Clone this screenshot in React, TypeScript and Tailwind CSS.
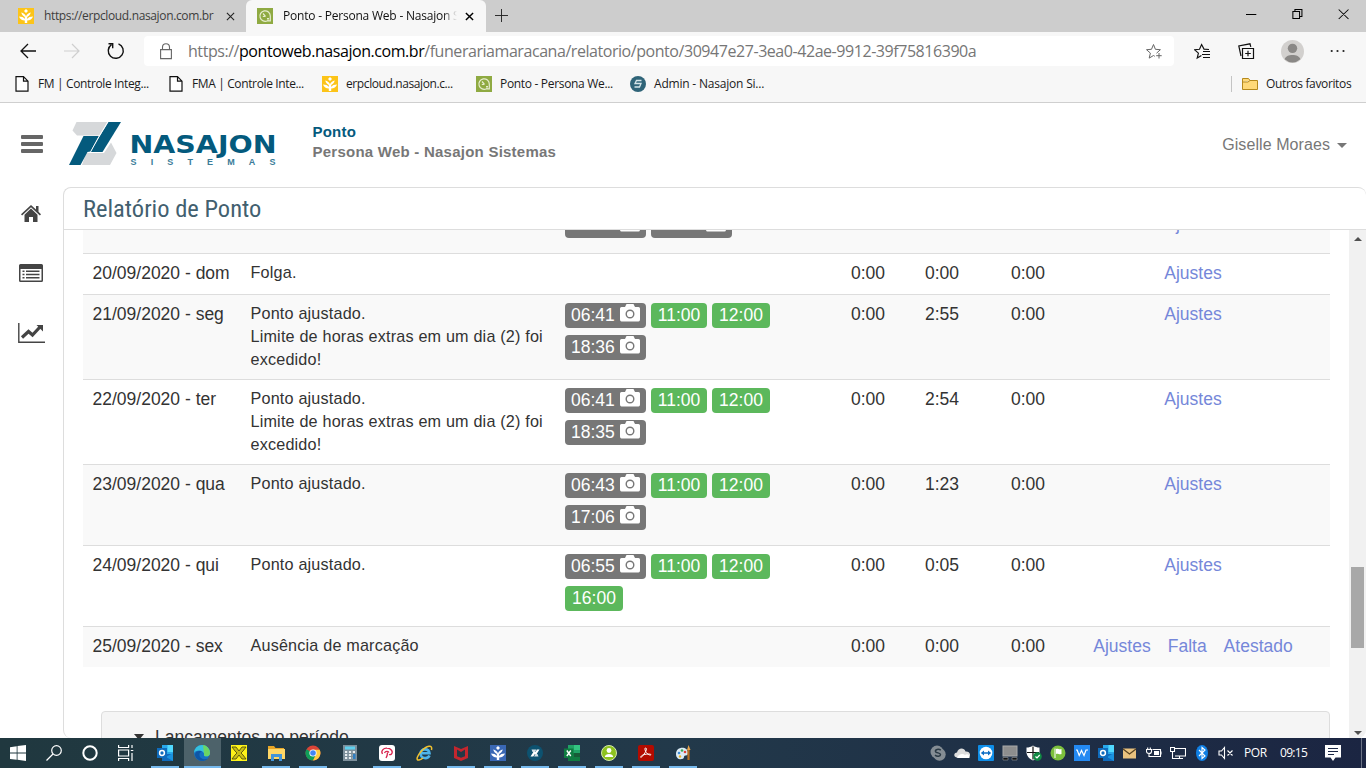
import React from "react";

const UI = "font-['Open_Sans','Noto_Sans',sans-serif]";
const ARIAL = "font-['Liberation_Sans',Arial,sans-serif]";

type Box = { className?: string };

function SproutIcon({ className = "" }: Box) {
  return (
    <svg viewBox="0 0 16 16" className={`size-4 shrink-0 ${className}`}>
      <rect width="16" height="16" fill="currentColor" />
      <path d="M8 1l2 2-2 2-2-2zM1 8.500c2.500 0 5 .8 5.800 2.500V9C5.500 8.200 4 7 3.200 4.500 5.500 5 7.500 6.500 8 8.500c.5-2 2.500-3.500 4.800-4C12 7 10.500 8.200 9.200 9v2c.8-1.700 3.300-2.500 5.800-2.500-1 2.500-3 4-5.800 4V15H6.800v-2.500C4 12.500 2 11 1 8.500z" fill="#fff" />
    </svg>
  );
}

function PontoIcon() {
  return (
    <svg viewBox="0 0 16 16" className="size-4 shrink-0">
      <rect width="16" height="16" fill="#8faa42" />
      <path d="M10.500 12.700A5.200 5.200 0 1 1 13.300 8v4.800h-3" stroke="#e6edcf" strokeWidth="1.200" fill="none" />
      <path d="M6 5.500l2.500 3M8.500 8.500H5.800M10 10.500h2M10 12h2" stroke="#e6edcf" strokeWidth="1.200" fill="none" />
    </svg>
  );
}

function PageIcon() {
  return (
    <svg viewBox="0 0 14 16" className="h-4 w-3.5 shrink-0" fill="#fff" stroke="#111" strokeWidth="1.200">
      <path d="M1 .7h7.500L13 5.200v10H1zM8.500.7v4.500H13" />
    </svg>
  );
}

function CloseIcon({ className = "" }: Box) {
  return (
    <svg viewBox="0 0 10 10" className={`size-[9px] shrink-0 ${className}`} stroke="currentColor" fill="none">
      <path d="M1 1l8 8M9 1L1 9" />
    </svg>
  );
}

function TabStrip() {
  return (
    <div className="flex h-8 shrink-0 bg-[#cdcdcd]">
      <div className="flex w-[246px] items-center pl-[18px] text-[#3d3d3d]">
        <SproutIcon className="text-[#fcc419]" />
        <span className="ml-[10px] w-[172px] whitespace-nowrap text-[12px] tracking-[-0.36px]">https://erpcloud.nasajon.com.br</span>
        <CloseIcon className="ml-[10px] stroke-[1.200] text-[#222]" />
      </div>
      <div className="flex w-[240px] items-center rounded-t-md bg-[#f7f7f7] pl-[11px] text-[#111]">
        <PontoIcon />
        <span className="ml-[10px] w-[174px] overflow-hidden whitespace-nowrap text-[12px] tracking-[-0.21px] [mask-image:linear-gradient(to_right,#000_92%,transparent)]">
          Ponto - Persona Web - Nasajon Sistemas
        </span>
        <CloseIcon className="ml-[8px] stroke-[1.600] text-black" />
      </div>
      <svg viewBox="0 0 14 14" className="mt-[9px] ml-[9px] size-[13px]" stroke="#222" fill="none"><path d="M7 0v14M0 7h14" /></svg>
      <div className="flex-1" />
      <svg viewBox="0 0 100 12" className="mt-2 mr-[17px] h-3 w-[103px] shrink-0" preserveAspectRatio="none" stroke="#000" fill="none">
        <path d="M0 6.500h10M45.500 3.500h6.500v7h-6.500zM47.500 3.500v-2h6.800v7h-2.300M90 1.500l9.500 9.500M99.500 1.500L90 11" />
      </svg>
    </div>
  );
}

function Toolbar() {
  return (
    <div className="flex h-[38px] shrink-0 items-center bg-[#f7f7f7]">
      <svg viewBox="0 0 16 16" className="ml-5 size-4" stroke="#111" strokeWidth="1.300" fill="none"><path d="M16 8H1M8 1L1 8l7 7" /></svg>
      <svg viewBox="0 0 16 16" className="ml-7 size-4" stroke="#cfcfcf" strokeWidth="1.200" fill="none"><path d="M0 8h15M8 1l7 7-7 7" /></svg>
      <svg viewBox="0 0 18 18" className="ml-[27px] size-[18px]" stroke="#111" strokeWidth="1.400" fill="none"><path d="M11.500 1.800A7.500 7.500 0 1 1 4.500 2.600M1.500 1.700h4.200v4.500" /></svg>
      <div className="ml-[19px] flex h-[30px] w-[1030px] items-center rounded bg-white pl-[16px]">
        <svg viewBox="0 0 12 17" className="h-[17px] w-3" stroke="#666" strokeWidth="1.100" fill="none"><path d="M.6 6.600h10.800v9H.6zM2.500 6.500V4.300a3.500 3.500 0 0 1 7 0v2.200" /></svg>
        <span className="ml-4 w-[790px] whitespace-nowrap text-[16px] leading-[22px] tracking-[-0.445px] text-[#767676]">
          https://<span className="text-black">pontoweb.nasajon.com.br</span>/funerariamaracana/relatorio/ponto/30947e27-3ea0-42ae-9912-39f75816390a
        </span>
        <svg viewBox="0 0 17 17" className="ml-[168px] size-[17px] shrink-0" stroke="#666" fill="none"><path d="M10.500 10.200l3.900-3.500-5-.4L7.500 1.500 5.500 6.300l-5 .4 3.900 3.400-1.200 5 4.300-2.600 1.300.8M13 10v5.500M10.200 12.700h5.500" /></svg>
      </div>
      <svg viewBox="0 0 17 17" className="ml-5 size-[17px]" stroke="#111" strokeWidth="1.150" fill="none"><path d="M15 6.500l-5-.4L7.600 1.500 5.500 6.300l-5 .4 3.900 3.400-1.200 5 4.200-2.500M9 8.500h7M8 11.500h8M9 14.500h7" /></svg>
      <svg viewBox="0 0 17 17" className="ml-[27px] size-[17px]" stroke="#111" strokeWidth="1.200" fill="none"><path d="M4.500 5.500h11v10h-11zM10 7.700v5.600M7.200 10.500h5.600M3 13L.8 3 12 .8l.8 3" /></svg>
      <svg viewBox="0 0 22 22" className="ml-[26px] size-[23px]">
        <circle cx="11" cy="11" r="11" fill="#d2d0ce" />
        <circle cx="11" cy="8" r="4.500" fill="#8a8886" />
        <path d="M3.500 18.500c1-5.500 14-5.500 15 0A11 11 0 0 1 3.500 18.500z" fill="#8a8886" />
      </svg>
      <svg viewBox="0 0 16 4" className="ml-[26px] h-1 w-4" fill="#222"><circle cx="1.700" cy="2" r="1.100" /><circle cx="7.500" cy="2" r="1.100" /><circle cx="13.500" cy="2" r="1.100" /></svg>
    </div>
  );
}

function Bookmarks() {
  const text = "whitespace-nowrap text-[12px]";
  return (
    <div className="flex h-[33px] shrink-0 items-center border-b border-[#cfcfcf] bg-[#f7f7f7] pb-1 pl-[15px] text-[#1b1b1b]">
      <div className="flex w-[154px] items-center gap-[9px]"><PageIcon /><span className={`${text} tracking-[-0.37px]`}>FM | Controle Integ...</span></div>
      <div className="flex w-[153px] items-center gap-[9px]"><PageIcon /><span className={`${text} tracking-[-0.37px]`}>FMA | Controle Inte...</span></div>
      <div className="flex w-[154px] items-center gap-2"><SproutIcon className="text-[#fcc419]" /><span className={`${text} tracking-[-0.4px]`}>erpcloud.nasajon.c...</span></div>
      <div className="flex w-[154px] items-center gap-2"><PontoIcon /><span className={`${text} tracking-[-0.32px]`}>Ponto - Persona We...</span></div>
      <div className="flex items-center gap-2">
        <svg viewBox="0 0 16 16" className="size-4"><circle cx="8" cy="8" r="8" fill="#2f6478" /><path d="M11.500 4.500h-5L5 7.500h6l-1.500 3.500h-5" stroke="#d5e5e9" strokeWidth="1.300" fill="none" /></svg>
        <span className={`${text} tracking-[-0.2px]`}>Admin - Nasajon Si...</span>
      </div>
      <div className="ml-auto h-4 w-px bg-[#c4c4c4]" />
      <svg viewBox="0 0 16 12" className="ml-[10px] h-3 w-4" fill="#ffd978" stroke="#b5891c"><path d="M.5.5h6l1.500 2h7.500v9H.5zM.5 4h5.500l2-1.500" /></svg>
      <span className={`${text} ml-2 w-[86px] tracking-[-0.36px]`}>Outros favoritos</span>
      <span className="w-[14px]" />
    </div>
  );
}

function Header() {
  return (
    <header className="flex h-[84px] shrink-0 bg-white">
      <div className="mt-8 ml-[21px] flex h-[18px] w-[22px] flex-col justify-between">
        <div className="h-1 rounded-[1px] bg-[#666]" />
        <div className="h-1 rounded-[1px] bg-[#666]" />
        <div className="h-1 rounded-[1px] bg-[#666]" />
      </div>
      <svg viewBox="0 0 210 46" className="mt-[18px] ml-[25px] h-[46px] w-[210px]">
        <path d="M8.500 1H40L31.500 14.500H9L4.500 9.500zM18 32H36L43 21.500 48.500 32 42 44H14z" fill="#d6d8da" />
        <path d="M1 44L15.500 15H31L22.500 30.500 19.500 31 12.500 44z" fill="#045a7d" />
        <path d="M40.500 1H53L34.500 31H22z" fill="#045a7d" />
        <path d="M40 .5L31 15.500 22.500 31" fill="none" stroke="#fff" strokeWidth="1" />
        <text x="61.500" y="31.500" textLength="147" lengthAdjust="spacingAndGlyphs" className="font-['DejaVu_Sans',sans-serif] text-[25px] font-bold" fill="#045a7d">NASAJON</text>
        <text x="62.500" y="43.700" textLength="145" className="font-['Liberation_Sans',sans-serif] text-[9px] font-bold" fill="#3a7c98">SISTEMAS</text>
      </svg>
      <div className="mt-[19px] ml-[34.500px] text-[15px] leading-5 font-bold whitespace-nowrap text-[#777]">
        <div className="tracking-[0.2px] text-[#045a7d]">Ponto</div>
        <div className="tracking-[0.24px]">Persona Web - Nasajon Sistemas</div>
      </div>
      <div className="mt-[30px] mr-[19px] ml-auto flex h-6 items-center text-[16px] tracking-[0.08px] text-[#777]">
        Giselle Moraes
        <svg viewBox="0 0 10 5" className="ml-[7px] h-[5px] w-[10px]" fill="#777"><path d="M0 0h10L5 5z" /></svg>
      </div>
    </header>
  );
}

function Sidebar() {
  return (
    <nav className="flex w-[63px] shrink-0 flex-col items-center pt-[18px] pr-px text-[#444]">
      <svg viewBox="0 0 20 17" className="h-[17px] w-5" fill="#444">
        <path d="M10 3.600l6.500 6.200V17H12v-5H8v5H3.500V9.800zM10 0L0 9.200l1.100 1.200L10 2.200l8.900 8.200L20 9.200 17.500 6.800V1H15v3.500z" />
      </svg>
      <svg viewBox="0 0 24 18" className="mt-[42px] h-[18px] w-6" fill="#444">
        <path d="M1.500 0h21Q24 0 24 1.500v15Q24 18 22.500 18h-21Q0 18 0 16.500v-15Q0 0 1.500 0zM1.500 5v11.500h21V5zM3.500 6.500h2V8h-2zM7 6.500h13.500V8H7zM3.500 9.800h2v1.500h-2zM7 9.800h13.500v1.500H7zM3.500 13h2v1.500h-2zM7 13h13.500v1.500H7z" fillRule="evenodd" />
      </svg>
      <svg viewBox="0 0 27 20" className="mt-[41px] h-5 w-[27px]" fill="none" stroke="#444">
        <path d="M.8 0v19.300H27" strokeWidth="1.400" />
        <path d="M4 14.500l6.500-6 4 3.500 7.500-8" strokeWidth="3.200" />
        <path d="M18.500 2H25v6.500z" fill="#444" stroke="none" />
      </svg>
    </nav>
  );
}

function Camera() {
  return (
    <svg viewBox="0 0 20 18" className="-mt-[3px] ml-[5px] h-[18px] w-5" fill="#fff">
      <path d="M6.500 0h7L15 3h3.500Q20 3 20 4.500v11Q20 17.500 18.500 17.500h-17Q0 17.500 0 15.500v-11Q0 3 1.500 3H5zM10 5.500a4.500 4.500 0 1 0 0 9 4.500 4.500 0 0 0 0-9zm0 1.400a3.100 3.100 0 1 1 0 6.200 3.100 3.100 0 0 1 0-6.200z" fillRule="evenodd" />
    </svg>
  );
}

function Stamp({ time, photo }: { time: string; photo: boolean }) {
  return photo ? (
    <span className="flex h-[25px] w-[81px] items-center rounded bg-[#777] pb-[2px] pl-[6px] text-white">{time}<Camera /></span>
  ) : (
    <span className={`flex h-[25px] items-center justify-center rounded bg-[#5cb85c] pb-[2px] text-white ${time === "11:00" ? "w-14" : "w-[58px]"}`}>{time}</span>
  );
}

const cols = "grid grid-cols-[158px_314px_273px_72px_86px_97px_1fr] border-b border-[#ddd] pl-[10px]";

type Row = { date: string; notes: string[]; stamps: [string, boolean][]; extra: string; links: string[]; cls: string };
const rows: Row[] = [
  { date: "20/09/2020 - dom", notes: ["Folga."], stamps: [], extra: "0:00", links: ["Ajustes"], cls: "h-[41px]" },
  { date: "21/09/2020 - seg", notes: ["Ponto ajustado.", "Limite de horas extras em um dia (2) foi", "excedido!"], stamps: [["06:41", true], ["11:00", false], ["12:00", false], ["18:36", true]], extra: "2:55", links: ["Ajustes"], cls: "h-[85px] bg-[#f9f9f9]" },
  { date: "22/09/2020 - ter", notes: ["Ponto ajustado.", "Limite de horas extras em um dia (2) foi", "excedido!"], stamps: [["06:41", true], ["11:00", false], ["12:00", false], ["18:35", true]], extra: "2:54", links: ["Ajustes"], cls: "h-[85px]" },
  { date: "23/09/2020 - qua", notes: ["Ponto ajustado."], stamps: [["06:43", true], ["11:00", false], ["12:00", false], ["17:06", true]], extra: "1:23", links: ["Ajustes"], cls: "h-[81px] bg-[#f9f9f9]" },
  { date: "24/09/2020 - qui", notes: ["Ponto ajustado."], stamps: [["06:55", true], ["11:00", false], ["12:00", false], ["16:00", false]], extra: "0:05", links: ["Ajustes"], cls: "h-[81px]" },
  { date: "25/09/2020 - sex", notes: ["Ausência de marcação"], stamps: [], extra: "0:00", links: ["Ajustes", "Falta", "Atestado"], cls: "h-10 border-b-0! bg-[#f9f9f9]" },
];

function Report() {
  return (
    <main className="flex min-w-0 flex-1 flex-col overflow-hidden rounded-lg border border-r-0 border-b-0 border-[#ddd] bg-white">
      <div className="h-[42px] shrink-0 border-b border-[#ddd] pl-[19px]">
        <h1 className="font-['Roboto_Condensed','Roboto',sans-serif] text-[24.5px] leading-[41px] whitespace-nowrap text-[#42606f]">Relatório de Ponto</h1>
      </div>
      <div className="flex min-h-0 flex-1">
        <div className={`${ARIAL} min-w-0 flex-1 overflow-hidden pr-[19px] pl-[19px] text-[#333]`}>
          <div className={`${cols} h-6 bg-[#f9f9f9] text-[17.5px]`}>
            <div className="col-start-3 -mt-[17px] flex gap-[5px]">
              <Stamp time="06:41" photo />
              <Stamp time="18:36" photo />
            </div>
            <div className="col-start-7 -mt-[16px] flex h-5 items-center justify-center pr-[37px] text-[#7587d9]">Ajustes</div>
          </div>
          {rows.map((r) => (
            <div key={r.date} className={`${cols} text-[17.5px] leading-[22px] ${r.cls}`}>
              <div className="-ml-[0.500px] pt-2 whitespace-nowrap">{r.date}</div>
              <div className="-ml-[0.500px] pt-[7px] text-[16.2px] leading-[23px] tracking-[0.18px] whitespace-nowrap">{r.notes.map((n) => <div key={n}>{n}</div>)}</div>
              <div className="flex flex-wrap content-start gap-x-[5px] gap-y-[7px] pt-2 pr-[40px]">
                {r.stamps.map(([time, photo], i) => <Stamp key={i} time={time} photo={photo} />)}
              </div>
              <div className="pt-2 pl-[13px]">0:00</div>
              <div className="pt-2 pl-[15px]">{r.extra}</div>
              <div className="pt-2 pl-[15px]">0:00</div>
              <div className="flex justify-center gap-[17px] pt-2 pr-[37px] text-[#7587d9]">
                {r.links.map((l) => <a key={l}>{l}</a>)}
              </div>
            </div>
          ))}
          <div className="mt-11 ml-[18px] flex h-[60px] items-start rounded border border-[#ddd] bg-[#f5f5f5] pt-[14px] pl-8 text-[17.5px] leading-[22px]">
            <svg viewBox="0 0 10 6" className="mt-2 mr-[11px] h-[6px] w-[10px]" fill="#333"><path d="M0 0h10L5 6z" /></svg>
            Lançamentos no período
          </div>
        </div>
        <div className="flex w-[17px] shrink-0 flex-col items-center bg-[#f1f1f1] pt-[7px]">
          <svg viewBox="0 0 8 4" className="h-1 w-2" fill="#505050"><path d="M4 0l4 4H0z" /></svg>
          <div className="mt-[326px] h-[81px] w-[13px] bg-[#a8a8a8]" />
          <svg viewBox="0 0 8 4" className="mt-[83px] h-1 w-2" fill="#505050"><path d="M0 0h8L4 4z" /></svg>
        </div>
      </div>
    </main>
  );
}

const ic = "size-4";
function Outlook() {
  return (
    <svg viewBox="0 0 16 16" className={ic}>
      <path d="M5 0h11v14H5z" fill="#28a8ea" /><path d="M10.500 0H16v7h-5.500z" fill="#50d9ff" /><path d="M5 9l11 0v7H5z" fill="#0f6bbd" /><path d="M16 8l-7 4 7 4z" fill="#1a93e0" />
      <rect y="3" width="10" height="10" fill="#0f6cbd" /><circle cx="5" cy="8" r="2.400" fill="none" stroke="#fff" strokeWidth="1.500" />
    </svg>
  );
}

type AppEntry = { icon: React.ReactNode; open?: boolean; active?: boolean };
const apps: AppEntry[] = [
  { open: true, icon: <Outlook /> },
  {
    open: true, active: true,
    icon: (
      <svg viewBox="0 0 16 16" className={ic}>
        <circle cx="8" cy="8" r="8" fill="#1673c4" /><path d="M0 8a8 8 0 0 1 16 0c0 2.500-2 3.600-4.500 3.300C9 11 10.500 9.500 9.800 8 8.500 5 2.500 4.500 0 8z" fill="#35c1e0" /><path d="M9 0a8 8 0 0 1 7 8c0 2.500-2 3.600-4.500 3.300C9.500 11 10.300 9.800 10 8.500z" fill="#6bd664" />
        <path d="M5.500 9c-.5 4 3.500 6 8 4.800C10 17.500 2 16 1 10c0-3 4-5 7-3.200C6.500 7 5.700 7.700 5.500 9z" fill="#0f56a5" />
      </svg>
    ),
  },
  { icon: <svg viewBox="0 0 16 16" className={ic}><rect width="16" height="16" fill="#fdf219" /><path d="M1 2l4 0 3 4 3-4h4l-3 4-2 2 2 2 3 4h-4l-3-4-3 4H1l3-4 2-2-2-2z" fill="#c9bf16" stroke="#55500a" strokeWidth=".9" /></svg> },
  { open: true, icon: <svg viewBox="0 0 17 16" className="h-4 w-[17px]"><path d="M0 1h6l1.500 2H16v11H0z" fill="#e8a526" /><path d="M0 4h17v10H0z" fill="#ffd766" /><path d="M3 16V9h11v7h-3v-4H6v4z" fill="#4394d8" /></svg> },
  { open: true, icon: <svg viewBox="0 0 16 16" className={ic}><circle cx="8" cy="8" r="7.500" fill="#db4437" /><path d="M8 8L1.500 4.200A7.500 7.500 0 0 0 8 15.500L11 9.500z" fill="#0f9d58" /><path d="M8 15.500A7.500 7.500 0 0 0 14.700 4.700H8l3 4.800z" fill="#ffcd40" /><circle cx="8" cy="8" r="3.600" fill="#fff" /><circle cx="8" cy="8" r="2.800" fill="#4285f4" /></svg> },
  { icon: <svg viewBox="0 0 14 16" className="h-4 w-3.5"><rect width="14" height="16" fill="#7c8f9b" /><path d="M2 1.500h10v3H2z" fill="#5fd0ee" /><path d="M2 7h10M2 10h10M2 13h10" stroke="#e8eef1" strokeWidth="1.800" strokeDasharray="2.200 1.700" /><path d="M10 9h2.500v5H10z" fill="#2f7ec2" /></svg> },
  { open: true, icon: <svg viewBox="0 0 16 16" className={ic}><rect width="16" height="16" rx="3" fill="#fff" /><path d="M3.500 9C1.500 6 4.500 3 8 3.200c4 0 6.500 3.500 4.500 5.800-1 1-2.500.5-2.500.5M5.500 8C6.500 6 9 6 10 7.500M8.500 7.500c0 2-.5 4-1.500 5.500" stroke="#d8254e" strokeWidth="1.300" fill="none" /></svg> },
  { icon: <svg viewBox="0 0 17 16" className="h-4 w-[17px]"><path d="M13.500 10.500C12 14 5 14.500 4.500 8.500 4.500 3 13 3 13.500 8.300H5" stroke="#4db4ea" strokeWidth="2.600" fill="none" /><path d="M15.500 5c1.500-6-5-4.500-10 1C1 11-.5 15.500 3 15c1.500-.2 3-1.200 4-2" stroke="#f2c230" strokeWidth="1.500" fill="none" /></svg> },
  { open: true, icon: <svg viewBox="0 0 14 16" className="h-4 w-3.5"><path d="M0 1l7 3 7-3v12l-7 3-7-3zm3 3.500v6.700l4 1.600 4-1.600V4.500L7 7z" fill="#c4262e" fillRule="evenodd" /></svg> },
  { open: true, icon: <SproutIcon className="text-[#3a68b5]" /> },
  { open: true, icon: <svg viewBox="0 0 16 16" className={ic}><circle cx="8" cy="8" r="8" fill="#0d5270" /><path d="M4.500 4.500h5L8 7H5.500zM11.500 11.500H7L8.500 9h2z" fill="#cfdde3" /><path d="M3.500 11.500L6.500 6.800h2.700L6.300 11.500zM12.500 4.500L9.500 9.200H7l3-4.700z" fill="#fff" /></svg> },
  { open: true, icon: <svg viewBox="0 0 16 16" className={ic}><path d="M4 0h12v16H4z" fill="#21a366" /><path d="M10 0h6v5h-6z" fill="#33c481" /><path d="M4 8h12v8H4z" fill="#107c41" /><path d="M10 8h6v4h-6z" fill="#185c37" /><rect y="3.500" width="9.500" height="9.500" fill="#107c41" /><path d="M2.800 5.500l4 5.500M6.800 5.500l-4 5.500" stroke="#fff" strokeWidth="1.400" /></svg> },
  { open: true, icon: <svg viewBox="0 0 16 16" className={ic}><circle cx="8" cy="8" r="7.500" fill="#8dc21f" stroke="#d4e8a8" /><circle cx="8" cy="5.500" r="2.400" fill="#fff" /><path d="M3.800 12c0-4 8.400-4 8.400 0z" fill="#fff" /></svg> },
  { open: true, icon: <svg viewBox="0 0 16 16" className={ic}><rect width="16" height="16" rx="2" fill="#b30b00" /><path d="M7.500 3c1.700-.5 1.300 4-4.500 9.500-1.200-2 4.500-4 9.500-3.300 2 1.500-4 1.500-5.500-4.500C6.800 3.500 7 3 7.500 3z" stroke="#fff" fill="none" /></svg> },
  { open: true, icon: <svg viewBox="0 0 17 16" className="h-4 w-[17px]"><path d="M1 9c0-8 12-8 12-1 0 4-4 1-4 4s-8 4-8-3z" fill="#dcebf4" /><circle cx="4" cy="8" r="1.300" fill="#3d8bd4" /><circle cx="7" cy="5.500" r="1.300" fill="#3baa55" /><circle cx="10" cy="7" r="1.300" fill="#e0443a" /><circle cx="5" cy="11.500" r="1.200" fill="#eab424" /><path d="M13.500 15V5" stroke="#b87022" strokeWidth="2.200" /><path d="M12 5l1.500-5L15.500 5z" fill="#e8a349" /></svg> },
];

const tray: React.ReactNode[] = [
  <svg viewBox="0 0 16 16" className={ic}><circle cx="7" cy="7" r="6.500" fill="#858d94" /><circle cx="9.500" cy="9.500" r="6.200" fill="#858d94" /><path d="M10.800 5.200C8.500 3.500 5 4.500 5.500 6.500c.5 1.800 5 1 5 3 0 2-3.500 2.300-5.500.6" stroke="#2a3944" strokeWidth="1.500" fill="none" /></svg>,
  <svg viewBox="0 0 16 16" className={ic}><path d="M2.500 12.500C-1 11.500 0 7.500 3 7.500 4 3 10 2 11.500 6.500c5-.5 6 5 2.500 6z" fill="#ddd" /><path d="M3 13c1-4 6-5 8-3 3-2 5 1 4.500 3z" fill="#fff" /></svg>,
  <svg viewBox="0 0 16 16" className={ic}><rect width="16" height="16" rx="1" fill="#0e8ee9" /><circle cx="8" cy="8" r="6.300" fill="#fff" /><path d="M2.800 8L6 5.500v1.700h4V5.500L13.200 8 10 10.500V8.800H6v1.700z" fill="#0e6ec4" /></svg>,
  <svg viewBox="0 0 16 16" className={ic}><rect x="1" y="1" width="14" height="10" fill="#8e8e8e" stroke="#aaa" /><path d="M1 12.500h5V15H1zM10 12.500h5V15h-5z" fill="#111" stroke="#999" strokeWidth=".6" /></svg>,
  <svg viewBox="0 0 16 16" className={ic}><path d="M7 .5c2 1.500 4 2 6.500 2V7c0 4-3 7-6.500 8.500C3.500 14 .5 11 .5 7V2.500C3 2.500 5 2 7 .5z" fill="#fff" /><path d="M7 1.500v13M1 7.500h12" stroke="#111" strokeWidth="1.200" /><circle cx="11.500" cy="11.500" r="4.300" fill="#108a43" /><path d="M9.500 11.500l1.500 1.500 2.700-3" stroke="#fff" fill="none" strokeWidth="1.200" /></svg>,
  <svg viewBox="0 0 16 16" className={ic}><circle cx="8" cy="8" r="7.500" fill="#7cbf3d" /><path d="M4.500 3.500h1V13h-1zM6 4c2-1 3 1 5.500 0v5C9 10 8 8 6 9z" fill="#fff" /></svg>,
  <svg viewBox="0 0 16 16" className={ic}><rect width="16" height="16" fill="#2389f2" /><path d="M2 5h1.200l2 5.500L7.500 5.500l2.500 5 2-5.500h2" stroke="#fff" strokeWidth="1.200" fill="none" /></svg>,
  <Outlook />,
  <svg viewBox="0 0 16 16" className={ic}><rect x="1" y="3.500" width="13" height="10" fill="#e9c27f" /><path d="M1 4l6.500 5L14 4" stroke="#5a4422" strokeWidth="1.300" fill="none" /></svg>,
  <svg viewBox="0 0 16 16" className={ic} stroke="#fff" fill="none"><path d="M6.500 4.500h8v7H5.500M15 6.500v3M.5 4.500h5v2q0 2-2.500 2T.5 6.500zM1.700 2.500v2M4.300 2.500v2M3 8.500v3h3" strokeWidth="1.100" /><path d="M8 6h5v4H8z" fill="#fff" stroke="none" /></svg>,
  <svg viewBox="0 0 16 16" className={ic} stroke="#fff" fill="none"><path d="M5 3.500h10.500v7.500H5M.5 2.500h4v4h-4zM2.500 6.500v7H13M9.500 11v2.500" strokeWidth="1.100" /></svg>,
  <svg viewBox="0 0 16 16" className={ic}><ellipse cx="8" cy="8" rx="6" ry="8" fill="#0f7fe5" /><path d="M5 5l6 6-3 2.500v-11L11 5l-6 6" stroke="#fff" strokeWidth="1.100" fill="none" /></svg>,
  <svg viewBox="0 0 16 16" className={ic} stroke="#fff" fill="none"><path d="M1 6h2.500L6.500 2.500v11L3.500 10H1zM9.500 5.500l5 5M14.500 5.500l-5 5" strokeWidth="1.100" /></svg>,
];

function Taskbar() {
  return (
    <footer className="flex h-[30px] shrink-0 items-center bg-linear-to-r from-[#20383f] via-[#22394a] to-[#1b2542] text-white">
      <div className="flex h-full w-[146.500px] items-center">
        <div className="flex w-9 justify-center"><svg viewBox="0 0 16 16" className={ic} fill="#fff"><path d="M0 2.200l6.700-1V7.600H0zM7.500 1.100L16 0v7.600H7.500zM0 8.400h6.700v6.400L0 13.900zM7.500 8.400H16V16l-8.500-1.200z" /></svg></div>
        <div className="flex w-9 justify-center"><svg viewBox="0 0 16 16" className={ic} fill="none" stroke="#fff" strokeWidth="1.200"><circle cx="10.500" cy="5.500" r="4.800" /><path d="M7 9L.5 15.500" /></svg></div>
        <div className="flex w-9 justify-center"><svg viewBox="0 0 16 16" className={ic} fill="none" stroke="#fff" strokeWidth="2"><circle cx="8" cy="8" r="6.700" /></svg></div>
        <div className="flex w-9 justify-center"><svg viewBox="0 0 16 16" className={ic} fill="none" stroke="#fff" strokeWidth="1.200"><path d="M.6 0v2.500h10V0M.6 5h10v6H.6zM.6 16v-2.500h10V16M14 0v3M14 8v8M12.800 5.500h2.500" /></svg></div>
      </div>
      {apps.map((a, i) => (
        <div key={i} className={`flex h-full w-[37px] flex-col items-center pt-[7px] ${a.active ? "bg-[#4d626a]" : ""}`}>
          {a.icon}
          {a.open && <div className={`mt-[5px] h-[2px] shrink-0 bg-[#76b9ed] ${a.active ? "w-[37px]" : "w-7"}`} />}
        </div>
      ))}
      <div className="ml-auto flex w-[436px] items-center">
        {tray.map((t, i) => <div key={i} className="flex w-6 justify-center pr-[8px] [&>svg]:shrink-0">{t}</div>)}
        <span className="ml-[2px] w-9 text-[12px] tracking-[-0.4px]">POR</span>
        <span className="w-[45px] text-[12px] tracking-[-0.7px]">09:15</span>
        <svg viewBox="0 0 16 16" className={ic}><path d="M0 0h16v12.500h-5.500L8 16l-2.500-3.500H0z" fill="#fff" /><path d="M3 3.500h10M3 6.500h10M3 9.500h6" stroke="#1b2745" /></svg>
        <div className="ml-auto h-[30px] w-[5px] border-l border-[#6b7385]" />
      </div>
    </footer>
  );
}

export default function App() {
  return (
    <div className={`flex h-[768px] w-[1366px] flex-col overflow-hidden bg-white ${UI}`}>
      <TabStrip />
      <Toolbar />
      <Bookmarks />
      <div className={`${ARIAL} flex min-h-0 flex-1 flex-col`}>
        <Header />
        <div className="flex min-h-0 flex-1">
          <Sidebar />
          <Report />
        </div>
      </div>
      <Taskbar />
    </div>
  );
}
